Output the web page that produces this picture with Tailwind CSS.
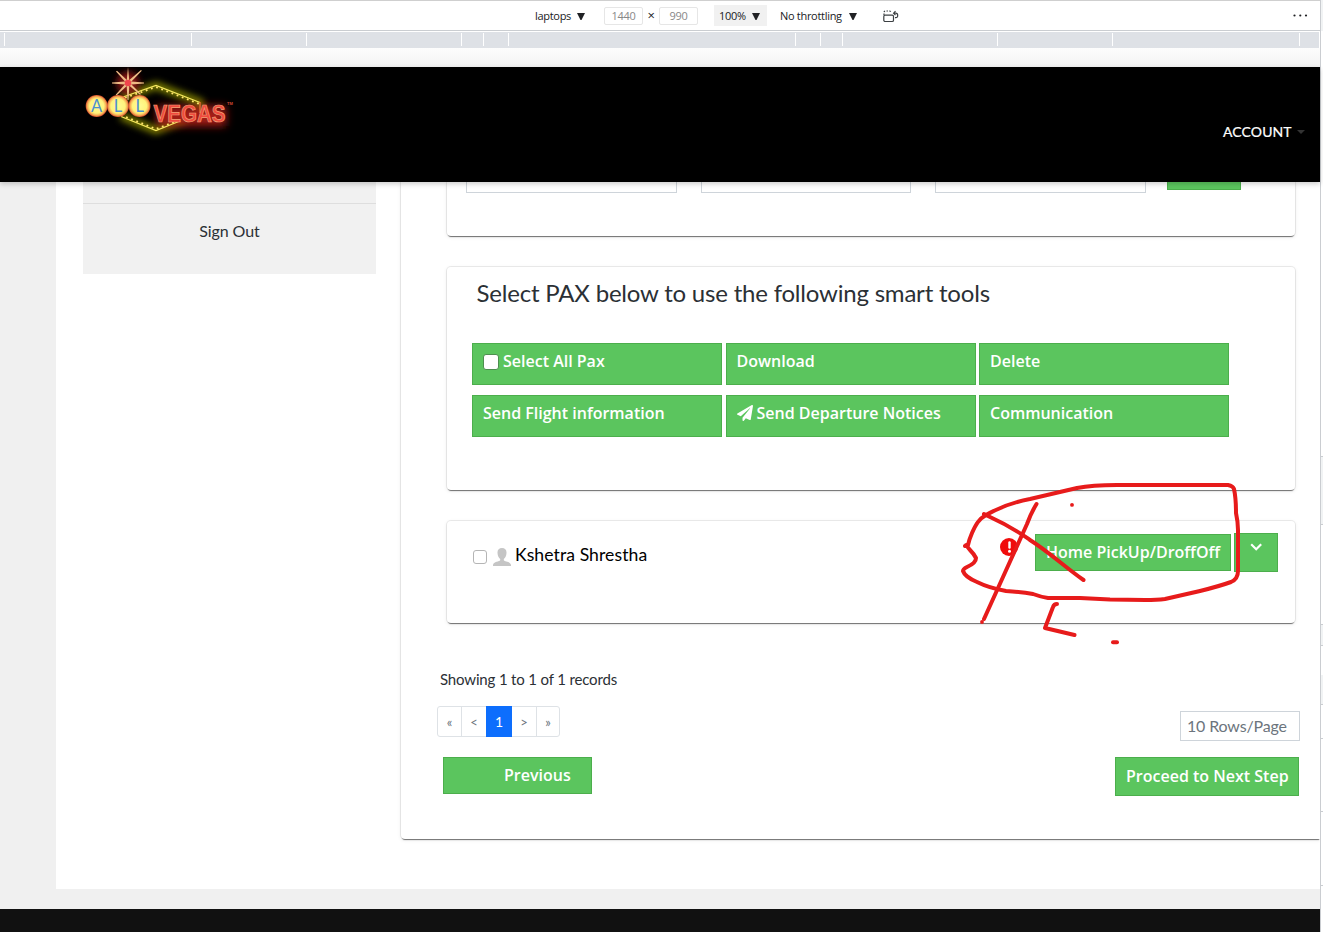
<!DOCTYPE html>
<html lang="en">
<head>
<meta charset="utf-8">
<title>All Vegas</title>
<script src="https://cdn.jsdelivr.net/npm/@tailwindcss/browser@4"></script>
</head>
<body class="relative flex h-[932px] w-[1323px] overflow-hidden bg-white font-['Lato',sans-serif] text-[#2b3035]">
<div class="flex h-full w-[1320px] flex-col">
  <!-- device toolbar -->
  <div class="flex h-[31px] shrink-0 items-center border-t border-b border-t-[#cfcfcf] border-b-[#cacdd1] pl-[535px] pt-px font-['Open_Sans',sans-serif] text-[11px] tracking-[-0.3px] text-[#202124]">
    <span class="w-[36px] whitespace-nowrap">laptops</span>
    <svg class="ml-[6px] h-[7px] w-[8px]" viewBox="0 0 8 7"><path d="M0 0h8L4.500 7h-1z" fill="#202124"/></svg>
    <span class="ml-[19px] -mt-px h-[18px] w-[39px] rounded-[2px] border border-[#e6e6e6] text-center leading-[16px] text-[#888]">1440</span>
    <span class="w-[16px] text-center text-[13px]">×</span>
    <span class="-mt-px h-[18px] w-[39px] rounded-[2px] border border-[#e6e6e6] text-center leading-[16px] text-[#888]">990</span>
    <span class="-mt-px ml-[16px] flex h-[21px] w-[53px] items-center bg-[#f1f1f1] pl-[5px] pt-px"><span class="w-[33px]">100%</span><svg class="h-[7px] w-[8px]" viewBox="0 0 8 7"><path d="M0 0h8L4.500 7h-1z" fill="#202124"/></svg></span>
    <span class="ml-[13px] w-[63px] whitespace-nowrap">No throttling</span>
    <svg class="ml-[6px] h-[7px] w-[8px]" viewBox="0 0 8 7"><path d="M0 0h8L4.500 7h-1z" fill="#202124"/></svg>
    <svg class="ml-[26px] h-[13px] w-[16px]" viewBox="0 0 16 13" fill="none" stroke="#3c4043" stroke-width="1.200"><path d="M1 5V2.500Q1 1 2.500 1H6.500Q8 1 8 2.500" stroke-dasharray="1.500 1.300"/><rect x=".8" y="5.200" width="9.700" height="6.300" rx="1.300"/><path d="M11 3.200h1.700q2 0 2 2.200T12.700 7.600H12M12.500 1.200l-1.900 2 1.900 1.900"/></svg>
    <svg class="ml-auto mr-[12px] -mt-px h-[3px] w-[15px]" viewBox="0 0 15 3" fill="#202124"><circle cx="1.500" cy="1.500" r="1.100"/><circle cx="7.300" cy="1.500" r="1.100"/><circle cx="13" cy="1.500" r="1.100"/></svg>
  </div>
  <!-- media ruler -->
  <svg class="mt-px h-[16px] w-[1319px] shrink-0 bg-[#dee1e6]" viewBox="0 0 1319 16"><path d="M4.500 1v13M191.500 1v13M306.500 1v13M461.500 1v13M483.500 1v13M508.500 1v13M795.500 1v13M820.500 1v13M842.500 1v13M997.500 1v13M1112.500 1v13M1299.500 1v13" stroke="#fff"/></svg>
  <div class="h-[19px] shrink-0 bg-gradient-to-b from-[#fdfdfd] to-[#f3f3f3]"></div>
  <!-- site header -->
  <header class="z-10 flex h-[115px] shrink-0 items-start justify-between bg-black pl-[70px] shadow-[0_2px_5px_rgba(0,0,0,0.2)]">
    <svg class="h-[90px] w-[180px]" viewBox="0 7 180 90">
      <defs>
        <filter id="g" x="-50%" y="-50%" width="200%" height="200%"><feGaussianBlur stdDeviation="3.500"/></filter>
        <filter id="h" filterUnits="userSpaceOnUse" x="60" y="25" width="120" height="60"><feGaussianBlur stdDeviation="4.500"/></filter>
        <radialGradient id="b"><stop offset="0" stop-color="#fffb95"/><stop offset=".65" stop-color="#fff37c"/><stop offset=".85" stop-color="#f6ad55"/><stop offset="1" stop-color="#d64a2c"/></radialGradient>
      </defs>
      <path d="M51 38L86 25.500 130 42.500v12M51 56L86 70.500 116 58" fill="none" stroke="#8b8d00" stroke-width="7" filter="url(#g)"/>
      <circle cx="58" cy="23" r="11" fill="#8e1414" filter="url(#g)"/>
      <path d="M87 56h69" stroke="#a51f16" stroke-width="20" filter="url(#h)"/>
      <path d="M53 37L86 25.500 130 42.500" fill="none" stroke="#f4e75d" stroke-width="1.200"/>
      <path d="M51 56.500L86 70.500 110 61" fill="none" stroke="#f4e75d" stroke-width="1.200"/>
      <path d="M55 37.800L86 27 129 43.800M51 55L86 69 112 59" fill="none" stroke="#ffe46d" stroke-width="1.800" stroke-dasharray="1.800 3.700"/>
      <path d="M130 42v11" stroke="#d86a2c" stroke-width="1.500"/>
      <g fill="#eebb85"><path d="M58 7l1.500 16-1 17h-1l-1-17zM42 22.500l16-1.200 16 1.200v1l-16 1.200-16-1.200z"/><path d="M46 11.500l1-.7 12 11.200 12 12-1 .7-13-11zM71 10l.8.8L59 24 46.500 35.500l-.8-.8L57 22z"/></g>
      <circle cx="58" cy="23" r="3.300" fill="#f0454d"/>
      <g fill="url(#b)"><circle cx="26.700" cy="46" r="11"/><circle cx="48" cy="46" r="11"/><circle cx="69.500" cy="46" r="11"/></g>
      <g font-family="Lato,sans-serif" font-size="16.500" fill="#4c8fd0" text-anchor="middle"><text x="26.500" y="51.700">A</text><text x="48" y="51.700">L</text><text x="69.700" y="51.700">L</text></g>
      <text x="83.500" y="62" font-family="Liberation Sans,sans-serif" font-weight="700" font-size="23" textLength="72" lengthAdjust="spacingAndGlyphs" fill="#f04a3e" stroke="#f1a177" stroke-width=".7">VEGAS</text>
      <text x="157" y="44.500" font-family="Liberation Sans,sans-serif" font-weight="700" font-size="4" fill="#cf4b35">TM</text>
    </svg>
    <div class="mt-[56px] flex items-center pr-[15px] text-[14px] leading-[18px] text-white"><span class="w-[69px] whitespace-nowrap tracking-[0.1px] [-webkit-text-stroke:0.2px_white]">ACCOUNT</span><span class="ml-[5px] border-x-4 border-t-4 border-x-transparent border-t-[#333]"></span></div>
  </header>
  <main class="flex h-[707px] shrink-0 bg-white">
    <div class="w-[56px] bg-[#f0f0f0]"></div>
    <aside class="ml-[27px] h-[92px] w-[293px] bg-[#f1f1f1] pt-[21px]">
      <div class="border-t border-[#dedede] pt-[15px] text-center text-[16px] leading-[24px] tracking-[-0.1px]">Sign Out</div>
    </aside>
    <section class="ml-[25px] h-[657px] w-[919px] rounded-bl-[4px] shadow-[0_2px_1px_-1px_rgba(0,0,0,0.5),0_0_0_1px_rgba(0,0,0,0.07),0_1px_4px_rgba(0,0,0,0.09)] [clip-path:inset(0_0_-10px_-10px)]">
      <div class="ml-[46px] flex h-[54px] w-[848px] items-start rounded-b-[4px] pl-[19px] shadow-[0_2px_1px_-1px_rgba(0,0,0,0.5),0_0_0_1px_rgba(0,0,0,0.07),0_1px_4px_rgba(0,0,0,0.09)]">
        <div class="h-[11px] w-[211px] border border-t-0 border-[#ced4da]"></div>
        <div class="ml-[24px] h-[11px] w-[210px] border border-t-0 border-[#ced4da]"></div>
        <div class="ml-[24px] h-[11px] w-[211px] border border-t-0 border-[#ced4da]"></div>
        <div class="ml-[21px] h-[8px] w-[74px] border border-t-0 border-[#4cae4c] bg-[#5bc55e]"></div>
      </div>
      <div class="ml-[46px] mt-[31px] h-[223px] w-[848px] rounded-[4px] pl-[25px] pt-[8px] shadow-[0_2px_1px_-1px_rgba(0,0,0,0.5),0_0_0_1px_rgba(0,0,0,0.07),0_1px_4px_rgba(0,0,0,0.09)]">
        <h2 class="ml-[4.500px] whitespace-nowrap text-[24px] leading-[36px] tracking-[-0.2px]">Select PAX below to use the following smart tools</h2>
        <div class="mt-[32px] grid grid-cols-[250px_250px_250px] gap-x-[3.500px] gap-y-[10px] font-['Open_Sans',sans-serif] text-[16px] font-semibold leading-[24px] text-white">
          <div class="flex h-[42px] items-start border border-[#4cae4c] bg-[#5bc55e] px-[10px] pt-[5px]"><span class="mr-[4px] mt-[5px] h-[16px] w-[16px] rounded-[3px] border border-[#4d8f4f] bg-white"></span>Select All Pax</div>
          <div class="h-[42px] border border-[#4cae4c] bg-[#5bc55e] px-[10px] pt-[5px]">Download</div>
          <div class="h-[42px] border border-[#4cae4c] bg-[#5bc55e] px-[10px] pt-[5px]">Delete</div>
          <div class="h-[42px] border border-[#4cae4c] bg-[#5bc55e] px-[10px] pt-[5px]">Send Flight information</div>
          <div class="flex h-[42px] items-start border border-[#4cae4c] bg-[#5bc55e] px-[10px] pt-[5px]"><svg class="mr-[4px] mt-[4px] h-[16px] w-[16px]" viewBox="0 0 512 512" fill="#fff"><path d="M476 3.200L12.500 270.600c-18.100 10.400-15.800 35.600 2.200 43.200L121 358.400l287.300-253.200c5.500-4.900 13.300 2.600 8.600 8.300L176 407v80.500c0 23.600 28.500 32.900 42.500 15.800L282 426l124.600 52.200c14.200 6 30.400-2.900 33-18.200l72-432C515 7.800 493.300-6.800 476 3.200z"/></svg>Send Departure Notices</div>
          <div class="h-[42px] border border-[#4cae4c] bg-[#5bc55e] px-[10px] pt-[5px]">Communication</div>
        </div>
      </div>
      <div class="ml-[46px] mt-[31px] flex h-[102px] w-[848px] items-start rounded-[4px] pl-[26px] shadow-[0_2px_1px_-1px_rgba(0,0,0,0.5),0_0_0_1px_rgba(0,0,0,0.07),0_1px_4px_rgba(0,0,0,0.09)]">
        <span class="mt-[29px] h-[14px] w-[14px] rounded-[3px] border border-[#b5b5b5]"></span>
        <svg class="ml-[6px] mt-[27px] h-[18px] w-[18px]" viewBox="0 0 18 18" fill="#c5c5c5"><path d="M9 0c3 0 4.700 1.800 4.500 5-.1 3-1.300 5-2.700 6v1.200c.5 1.300 6.800 1.200 7.200 4.800V18H0v-1c.4-3.600 6.700-3.500 7.200-4.800V11C5.800 10 4.600 8 4.500 5 4.300 1.800 6 0 9 0z"/></svg>
        <span class="ml-[4px] mt-[21px] w-[200px] whitespace-nowrap text-[17.600px] leading-[26px] tracking-[0.07px] text-black">Kshetra Shrestha</span>
        <svg class="ml-[285px] mt-[17px] h-[18px] w-[18px]" viewBox="0 0 18 18"><circle cx="9" cy="9" r="9" fill="#f00c0c"/><path d="M9.500 4.500v5" stroke="#fff" stroke-width="2.400" stroke-linecap="round"/><circle cx="9.500" cy="13.300" r="1.500" fill="#fff"/></svg>
        <div class="ml-[17px] mt-[13px] h-[37px] w-[196px] whitespace-nowrap border border-[#4cae4c] bg-[#5bc55e] pl-[10px] pt-[5px] font-['Open_Sans',sans-serif] text-[16px] font-semibold leading-[24px] text-white">Home PickUp/DroffOff</div>
        <div class="ml-[3px] mt-[12px] flex h-[39px] w-[44px] justify-center border border-[#4cae4c] bg-[#5bc55e] pt-[9px]"><svg class="h-[8px] w-[12px]" viewBox="0 0 12 8"><path d="M1.200 1.300L6.200 6.200l5-4.900" fill="none" stroke="#fff" stroke-width="2.200"/></svg></div>
      </div>
      <p class="ml-[39px] mt-[44px] text-[15px] leading-[24px] tracking-[-0.16px]">Showing 1 to 1 of 1 records</p>
      <div class="ml-[36px] mt-[15px] flex h-[31px] w-[123px] rounded-[3px] border border-[#dee2e6] text-center text-[13px] leading-[30px] text-[#6c757d]">
        <span class="w-[24px] border-r border-[#dee2e6]">«</span><span class="w-[24px]">&lt;</span><span class="-my-px w-[26px] bg-[#0d6efd] text-[14px] leading-[32px] text-white">1</span><span class="w-[25px] border-r border-[#dee2e6]">&gt;</span><span class="w-[22px]">»</span>
      </div>
      <div class="-mt-[26px] mr-[20px] flex justify-end"><div class="h-[30px] w-[120px] border border-[#ced4da] pl-[6px] text-[16px] leading-[28px] tracking-[-0.16px] text-[#6c757d]">10 Rows/Page</div></div>
      <div class="mr-[21px] mt-[16px] flex items-start justify-between pl-[42px] font-['Open_Sans',sans-serif] text-[16px] font-semibold leading-[24px] text-white">
        <div class="h-[37px] w-[149px] border border-[#4cae4c] bg-[#5bc55e] pl-[60px] pt-[5px]">Previous</div>
        <div class="h-[39px] w-[184px] whitespace-nowrap border border-[#4cae4c] bg-[#5bc55e] pl-[10px] pt-[6px]">Proceed to Next Step</div>
      </div>
    </section>
  </main>
  <div class="h-[20px] shrink-0 bg-[#f0f0f0]"></div>
  <footer class="h-[23px] shrink-0 bg-[#111]"></footer>
</div>
<div class="w-[3px] border-l border-[#cacdd1]"><svg class="h-[932px] w-[2px]" viewBox="0 0 2 932"><path d="M0 0h2v31H0zM0 456h2v68H0zM0 625h2v21H0zM0 675h2v29H0z" fill="#f1f3f4"/><path d="M0 456.500h2M0 524.500h2M0 624.500h2M0 645.500h2M0 704.500h2M0 738.500h2M0 811.500h2M0 885.500h2" stroke="#cacdd1"/></svg></div>
<!-- pen annotations -->
<svg class="pointer-events-none absolute left-0 top-0 z-20 h-[932px] w-[1323px]" viewBox="0 0 1323 932" fill="none" stroke="#e71b1b" stroke-width="4" stroke-linecap="round" stroke-linejoin="round">
  <path d="M984 514L988 516C1012 527 1020 533 1030 540C1049 552 1065 567 1083.500 580"/>
  <path d="M965 546L968 545Q969 540 972 533C976 524 979 519 986 515C1000 507 1014 502 1030 499L1077 488C1092 485 1102 485 1117 485H1228Q1233 486 1234 489Q1236 498 1236 513Q1238 522 1238 530V571Q1238 579 1231 582Q1220 586 1200 591L1165 599Q1157 600 1145 600L1110 599.500 1080 598H1048Q1041 597 1033 594Q1023 592 1006 591Q989 588 977 582Q965 577 963 571Q963 569 967 567Q976 563 976 558Q974 554 970 550L966 545"/>
  <path d="M1036.500 504Q1031 513 1027 524L1003 577 984 619M1057 604Q1054 604 1053 607L1045 628 1074.500 635"/>
  <path d="M982 622v.1M1072 504.800v.1" stroke-width="3.800"/>
  <path d="M1113 642.300h4"/>
</svg>
</body>
</html>
